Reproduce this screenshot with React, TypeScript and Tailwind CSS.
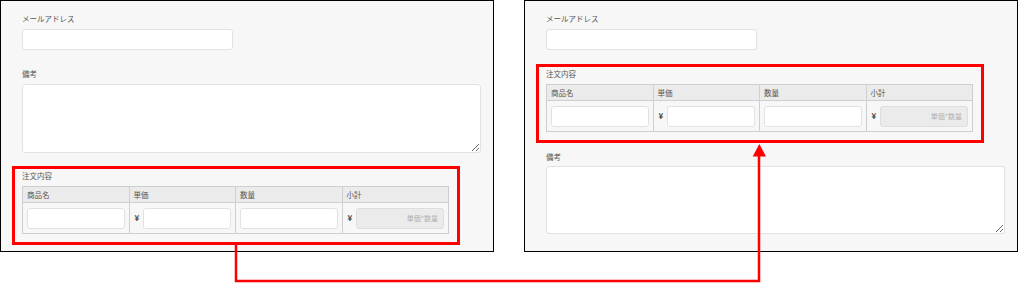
import React from "react";

function Label({ children }: { children: React.ReactNode }) {
  return <div className="h-[10px] text-[7.5px] leading-[10px] text-[#555] mb-[5px]">{children}</div>;
}

function EmailField() {
  return (
    <div className="flex flex-col">
      <Label>メールアドレス</Label>
      <input className="w-[211px] h-[21px] bg-white border border-[#e2e2e2] rounded-[3px] outline-none" />
    </div>
  );
}

function RemarksField({ h, gap }: { h: string; gap?: boolean }) {
  return (
    <div className="flex flex-col">
      <div className={`h-[10px] text-[7.5px] leading-[10px] text-[#555] ${gap ? "mb-[4px]" : "mb-[5px]"}`}>備考</div>
      <textarea className={`w-full ${h} bg-white border border-[#e2e2e2] rounded-[3px] outline-none resize-y block`} />
    </div>
  );
}

function OrderField() {
  const head = "h-[16px] flex items-center px-[4px] border-r border-b border-[#cfcfcf] bg-[#ebebeb] text-[7.5px] text-[#555]";
  const cell = "h-[31px] flex items-center px-[4px] border-r border-b border-[#cfcfcf] gap-[4px]";
  const inp = "flex-1 min-w-0 h-[21px] bg-white border border-[#e2e2e2] rounded-[3px] outline-none";
  return (
    <div className="relative w-[427px] flex flex-col">
      <Label>注文内容</Label>
      <div className="grid grid-cols-4 border-l border-t border-[#cfcfcf]">
        <div className={head}>商品名</div>
        <div className={head}>単価</div>
        <div className={head}>数量</div>
        <div className={head}>小計</div>
        <div className={cell}>
          <input className={inp} />
        </div>
        <div className={cell}>
          <span className="text-[8px] font-bold text-[#444] pl-[1px]">¥</span>
          <input className={inp} />
        </div>
        <div className={cell}>
          <input className={inp} />
        </div>
        <div className={cell}>
          <span className="text-[8px] font-bold text-[#444] pl-[1px]">¥</span>
          <div className="flex-1 h-[21px] bg-[#ebebeb] border border-[#dedede] rounded-[3px] flex items-center justify-end pr-[5px] text-[7px] text-[#b0b0b0]">
            単価*数量
          </div>
        </div>
      </div>
      <div className="absolute -left-[10px] -right-[11px] -top-[5px] -bottom-[11px] border-[3px] border-[#ff0000] pointer-events-none" />
    </div>
  );
}

export default function App() {
  return (
    <div className="relative w-[1018px] h-[286px] bg-white font-['Noto_Sans_CJK_JP',sans-serif]">
      <div className="flex gap-[30px]">
        <div className="w-[494px] h-[252px] border border-black bg-[#f7f7f7] pt-[13px] pl-[21px] pr-[12px] flex flex-col">
          <EmailField />
          <div className="mt-[19px]">
            <RemarksField h="h-[69px]" />
          </div>
          <div className="mt-[18px]">
            <OrderField />
          </div>
        </div>
        <div className="w-[494px] h-[252px] border border-black bg-[#f7f7f7] pt-[13px] pl-[21px] pr-[12px] flex flex-col">
          <EmailField />
          <div className="mt-[19px]">
            <OrderField />
          </div>
          <div className="mt-[20px]">
            <RemarksField h="h-[68px]" gap />
          </div>
        </div>
      </div>
      <svg className="absolute inset-0 pointer-events-none" width="1018" height="286" viewBox="0 0 1018 286">
        <polyline points="236,245 236,281 759,281 759,155" fill="none" stroke="#ff0000" strokeWidth="2.5" />
        <polygon points="759.3,144 752.7,156.5 766,156.5" fill="#ff0000" />
      </svg>
    </div>
  );
}
